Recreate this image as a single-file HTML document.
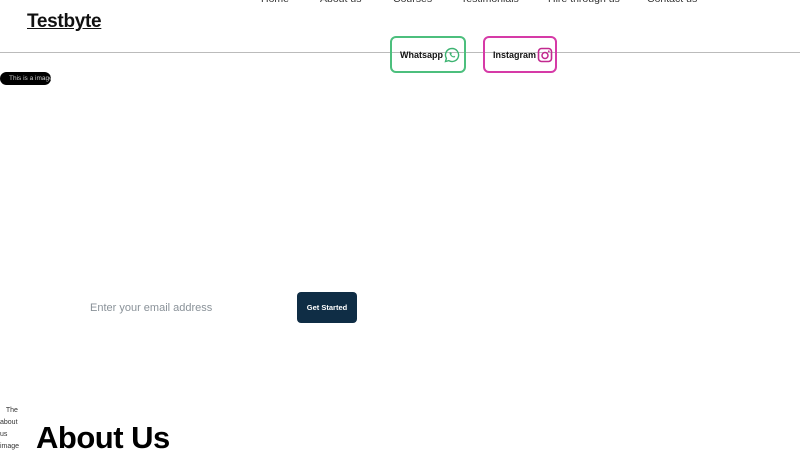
<!DOCTYPE html>
<html><head><style>
*{margin:0;padding:0;box-sizing:border-box}
body{width:800px;height:450px;overflow:hidden;background:#fff;font-family:"Liberation Sans",sans-serif;position:relative;color:#111}
.abs{position:absolute;white-space:nowrap}
.logo{left:27px;top:11px;font-size:19px;font-weight:bold;text-decoration:underline;color:#111;letter-spacing:-0.3px}
.nav{top:-7px;font-size:10.5px;color:#333}
.line{left:0;top:52px;width:800px;height:1px;background:#bbb}
.btn{top:36px;height:37px;border:2px solid;border-radius:6px;font-size:9px;font-weight:bold;display:flex;align-items:center;padding-left:8px;gap:1px;background:transparent}
.img1{left:0;top:72px;width:51px;height:13px;background:#000;border-radius:7px;color:#ccc;font-size:6.5px;line-height:13px;padding-left:9px;overflow:hidden}
.email{left:90px;top:302px;font-size:11px;color:#8a9299}
.gs{left:297px;top:292px;width:60px;height:31px;background:#0f2d45;border-radius:4px;color:#fff;font-size:7.5px;font-weight:bold;text-align:center;line-height:31px}
.about{left:36px;top:420px;font-size:31px;font-weight:bold;color:#000;letter-spacing:-0.5px}
.img2{left:0;top:405px;font-size:7px;line-height:12px;color:#333;width:22px;white-space:normal}
</style></head><body>
<div class="abs logo">Testbyte</div>
<div class="abs nav" style="left:261px">Home</div>
<div class="abs nav" style="left:320px">About us</div>
<div class="abs nav" style="left:393px">Courses</div>
<div class="abs nav" style="left:461px">Testimonials</div>
<div class="abs nav" style="left:548px">Hire through us</div>
<div class="abs nav" style="left:647px">Contact us</div>
<div class="abs line"></div>
<div class="abs btn" style="left:390px;width:76px;border-color:#4cbf7d">Whatsapp
<svg width="16" height="16" viewBox="0 0 16 16"><path d="M8 1.5a6.5 6.5 0 0 0-5.6 9.8L1.5 14.5l3.3-.9A6.5 6.5 0 1 0 8 1.5z" fill="none" stroke="#3cb371" stroke-width="1.4"/><path d="M5.5 5.5c0 2.5 2 5 5 5l.8-1-1.3-.7-.6.6c-1-.4-1.8-1.2-2.2-2.2l.6-.6-.7-1.3z" fill="#3cb371"/></svg></div>
<div class="abs btn" style="left:483px;width:74px;border-color:#d63aa7">Instagram
<svg width="16" height="16" viewBox="0 0 16 16"><rect x="1.5" y="1.5" width="13" height="13" rx="3" fill="none" stroke="#c2298f" stroke-width="1.6"/><circle cx="8" cy="8.5" r="3" fill="none" stroke="#c2298f" stroke-width="1.5"/><circle cx="11.8" cy="4.3" r=".9" fill="#c2298f"/></svg></div>
<div class="abs img1">This is a image</div>
<div class="abs email">Enter your email address</div>
<div class="abs gs">Get Started</div>
<div class="abs img2">&nbsp;&nbsp;&nbsp;The about us image</div>
<div class="abs about">About Us</div>
</body></html>
